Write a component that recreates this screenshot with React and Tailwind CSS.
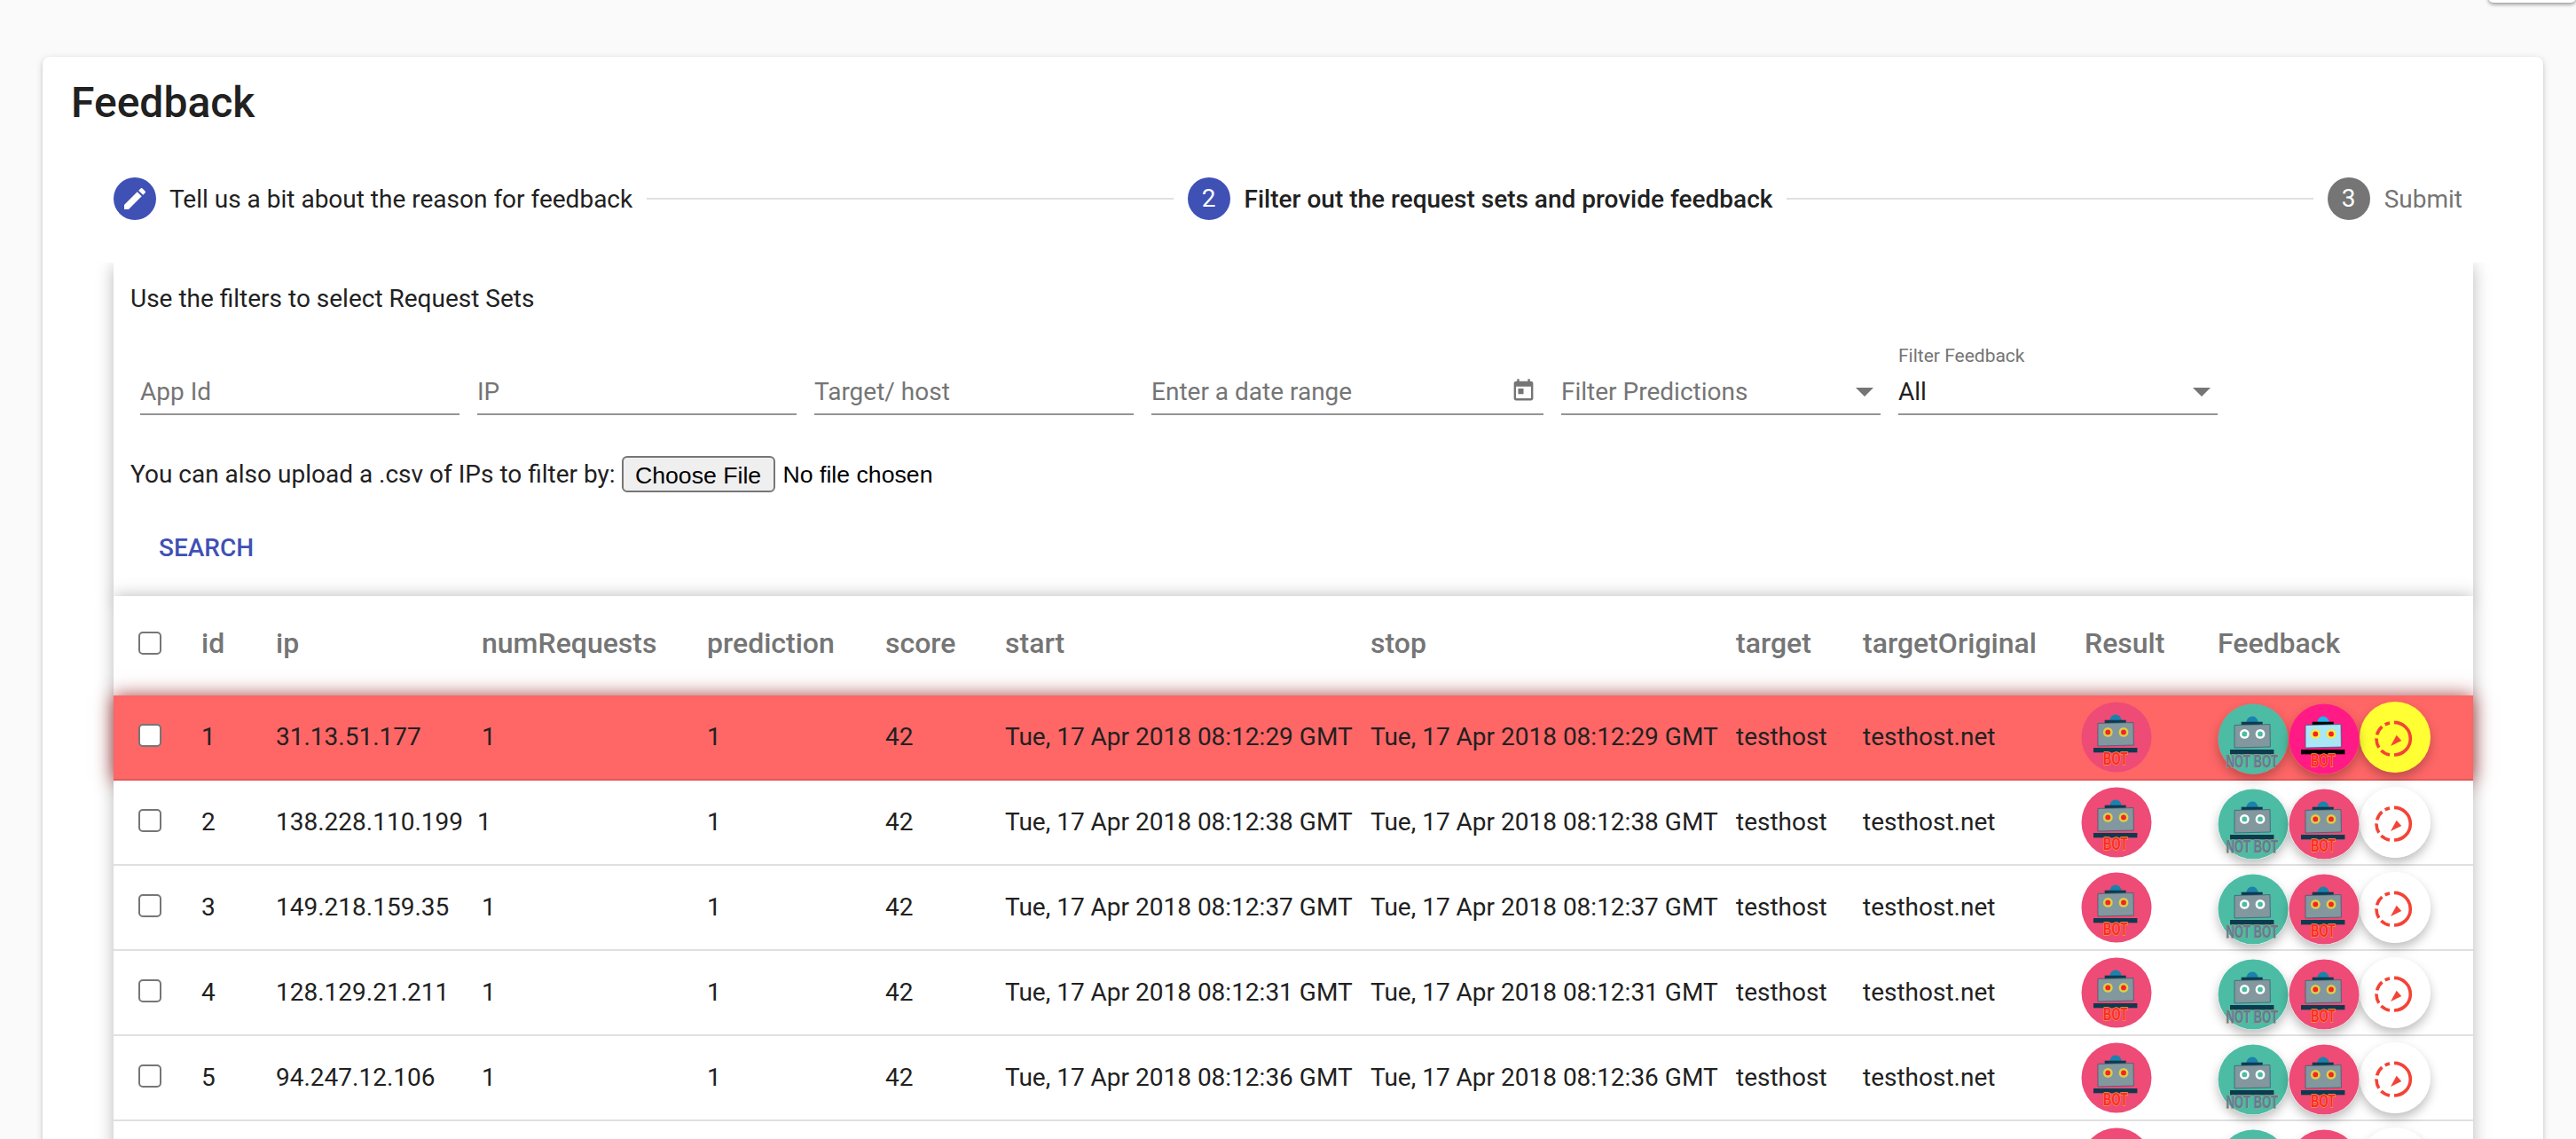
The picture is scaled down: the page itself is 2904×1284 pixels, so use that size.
const rows = [
  { id: 1, ip: '31.13.51.177', stamp: 'Tue, 17 Apr 2018 08:12:29 GMT', flagged: true },
  { id: 2, ip: '138.228.110.199', stamp: 'Tue, 17 Apr 2018 08:12:38 GMT', shift: true },
  { id: 3, ip: '149.218.159.35', stamp: 'Tue, 17 Apr 2018 08:12:37 GMT' },
  { id: 4, ip: '128.129.21.211', stamp: 'Tue, 17 Apr 2018 08:12:31 GMT' },
  { id: 5, ip: '94.247.12.106', stamp: 'Tue, 17 Apr 2018 08:12:36 GMT' },
  { id: 6, ip: '', stamp: '', empty: true },
]

const headers = ['id', 'ip', 'numRequests', 'prediction', 'score', 'start', 'stop', 'target', 'targetOriginal', 'Result', 'Feedback']

const gridCols = 'grid grid-cols-[71px_84px_232px_254px_201px_135px_412px_412px_143px_250px_150px_1fr] items-center pl-[28px]'

const RobotIcon = ({ bg = '#ee4b76', bright = false, notBot = false, label = true }) => {
  const dark = bright ? '#000000' : '#0e3a4f'
  return (
    <svg viewBox="0 0 80 80" className="w-[80px] h-[80px] block">
      <circle cx="40" cy="40" r="39.5" fill={bg} />
      <path d="M32.5 21a6.5 6.5 0 0 1 13 0z" fill={bright ? '#1fb4f0' : '#1a83ad'} />
      <rect x="26.7" y="20.7" width="24" height="3.4" fill={dark} />
      <path d="M19 24.4 L59 23.6 L59.4 49 L19 50z" fill={bright ? '#a8e6f8' : '#82979e'} stroke="#2d5a70" strokeWidth="0.7" />
      {[30.3, 48].map((cx) => (
        <g key={cx}>
          <circle cx={cx} cy="34.4" r="5.4" fill={notBot ? '#ffffff' : bright ? '#f5ec3e' : '#d9d04a'} />
          <circle cx={cx} cy="34.4" r="2.9" fill={notBot ? '#4dbca4' : '#f72222'} />
        </g>
      ))}
      <rect x="14" y="52" width="49.4" height="5.3" fill={dark} />
      {label && notBot && (
        <text transform="translate(9.4 72) scale(.62 1)" fontFamily="'Liberation Sans', sans-serif" fontWeight="700" fontSize="21" fill="#5b7ba0" stroke="#a39a66" strokeWidth="1.3" paintOrder="stroke">NOT BOT</text>
      )}
      {label && !notBot && (
        <text transform="translate(25 70.5) scale(.65 1)" fontFamily="'Liberation Sans', sans-serif" fontWeight="700" fontSize="20" fill="#ff2a2a" stroke="#f0a040" strokeWidth="1.3" paintOrder="stroke">BOT</text>
      )}
    </svg>
  )
}

const SkipIcon = ({ bg }) => (
  <svg viewBox="0 0 80 80" className="w-[80px] h-[80px] block">
    <circle cx="40" cy="40" r="40" fill={bg} />
    <path d="M39 23.4a18.3 18.3 0 0 1 0 36.6" fill="none" stroke="#f44336" strokeWidth="3.6" />
    <path d="M34 60a18.3 18.3 0 0 1 0-36" fill="none" stroke="#f44336" strokeWidth="3.6" strokeDasharray="11 4" />
    <path d="M41.7 37.7 L47.3 44 L35 50z" fill="#f44336" />
  </svg>
)

const TextFilter = ({ placeholder, width = 'w-[360px]', children }) => (
  <div className={`${width} h-[83px] flex items-end border-b-2 border-[#949494]`}>
    <input
      placeholder={placeholder}
      className="flex-1 min-w-0 h-[42px] pb-[6px] text-[28px] outline-none placeholder:text-[#757575] bg-transparent"
    />
    {children}
  </div>
)

const SelectFilter = ({ label, value }) => (
  <div className="w-[360px] h-[83px] flex flex-col justify-end border-b-2 border-[#949494]">
    {label && <span className="text-[21px] leading-[24px] text-[#757575] mb-[11px]">{label}</span>}
    <div className="flex items-center justify-between h-[42px] pb-[6px] pr-[8px]">
      <span className={`text-[28px] ${value === 'All' ? 'text-[#212121]' : 'text-[#757575]'}`}>{value}</span>
      <svg viewBox="0 0 20 10" className="w-[20px] h-[10px]"><path d="M0 0h20L10 10z" fill="#757575" /></svg>
    </div>
  </div>
)

const Step = ({ icon, className, labelClass, children }) => (
  <div className="flex items-center gap-4 shrink-0">
    <div className={`w-[48px] h-[48px] rounded-full flex items-center justify-center text-white text-[28px] ${className}`}>{icon}</div>
    <span className={`text-[28px] pt-[2px] ${labelClass}`}>{children}</span>
  </div>
)

const Tick = ({ className = '' }) => (
  <input type="checkbox" className={`appearance-none block w-[26px] h-[26px] bg-white border-2 border-[#767676] rounded-[5px] ${className}`} />
)

const App = () => {
  return (
    <div className="relative h-screen overflow-hidden bg-[#fafafa] pt-[64px] px-[37px] pr-[37px] font-[Roboto,sans-serif] text-[#212121]">
      <div className="absolute -top-[20px] right-0 w-[99px] h-[23px] bg-white rounded-[6px] shadow-[0_2px_4px_rgba(0,0,0,.4)]" />

      <div className="ml-[11px] w-[2819px] min-h-[1400px] bg-white rounded-[8px] pt-[25px] pl-[32px] shadow-[0_4px_2px_-2px_rgba(0,0,0,.2),0_2px_4px_0_rgba(0,0,0,.14),0_2px_10px_0_rgba(0,0,0,.12)]">
        <h1 className="text-[48px] leading-[54px] font-medium">Feedback</h1>

        <div className="mt-[57px] ml-[48px] w-[2648px] flex items-center">
          <Step
            className="bg-[#3f51b5]"
            labelClass="text-[#212121] -ml-[1px]"
            icon={
              <svg viewBox="0 0 24 24" className="w-[32px] h-[32px]" fill="#ffffff">
                <path d="M3 17.25V21h3.75L17.81 9.94l-3.75-3.75L3 17.25zM20.71 7.04c.39-.39.39-1.02 0-1.41l-2.34-2.34c-.39-.39-1.02-.39-1.41 0l-1.83 1.83 3.75 3.75 1.83-1.83z" />
              </svg>
            }
          >
            Tell us a bit about the reason for feedback
          </Step>
          <div className="flex-1 h-[2px] mx-4 bg-[#e0e0e0]" />
          <Step className="bg-[#3f51b5]" labelClass="font-medium text-[#212121]" icon="2">
            Filter out the request sets and provide feedback
          </Step>
          <div className="flex-1 h-[2px] mx-4 bg-[#e0e0e0]" />
          <Step className="bg-[#757575]" labelClass="text-[#757575]" icon="3">
            Submit
          </Step>
        </div>

        <div className="mt-[48px] ml-[48px] w-[2660px] [clip-path:inset(0_-60px_-60px_-60px)]">
          <div className="bg-white pt-[21px] pl-[19px] pb-[35px] shadow-[0_4px_18px_rgba(0,0,0,.28)]">
            <p className="text-[28px] leading-[40px]">Use the filters to select Request Sets</p>

            <div className="mt-[28px] ml-[11px] flex gap-5">
              <TextFilter placeholder="App Id" />
              <TextFilter placeholder="IP" />
              <TextFilter placeholder="Target/ host" />
              <TextFilter placeholder="Enter a date range" width="w-[442px]">
                <svg viewBox="0 0 24 24" className="w-[29px] h-[29px] mr-[8px] mb-[11px] shrink-0" fill="#757575">
                  <path d="M19 3h-1V1h-2v2H8V1H6v2H5c-1.11 0-1.99.9-1.99 2L3 19c0 1.1.89 2 2 2h14c1.1 0 2-.9 2-2V5c0-1.1-.9-2-2-2zm0 16H5V8h14v11zM7 10h5v5H7z" />
                </svg>
              </TextFilter>
              <SelectFilter value="Filter Predictions" />
              <SelectFilter label="Filter Feedback" value="All" />
            </div>

            <div className="mt-[46px] h-[41px] flex items-center text-[28px]">
              <span>You can also upload a .csv of IPs to filter by:</span>
              <button className="ml-[7px] w-[173px] h-[41px] bg-[#efefef] border-2 border-[#767676] rounded-[6px] text-[26.67px] text-black font-['Liberation_Sans',sans-serif]">
                Choose File
              </button>
              <span className="ml-[9px] text-[26.67px] text-black font-['Liberation_Sans',sans-serif]">No file chosen</span>
            </div>

            <button className="mt-[42px] ml-[32px] h-[40px] text-[28px] font-medium text-[#3f51b5] block">SEARCH</button>
          </div>

          <div className="relative bg-white shadow-[0_0_18px_rgba(0,0,0,.28)]">
            <div className={`${gridCols} h-[112px] pb-[6px]`}>
              <Tick />
              {headers.map((h) => (
                <div key={h} className="text-[32px] font-medium text-[#757575] whitespace-nowrap">{h}</div>
              ))}
            </div>

            {rows.map((row) => (
              <div
                key={row.id}
                className={`${gridCols} h-[96px] border-b-2 border-[rgba(0,0,0,.12)] ${row.flagged ? 'bg-[#ff6666] shadow-[0_0_20px_rgba(150,30,30,.85)]' : 'bg-white'}`}
              >
                <Tick className="-translate-y-[2px]" />
                <div className="text-[28px]">{!row.empty && row.id}</div>
                <div className="text-[28px]">{row.ip}</div>
                <div className={`text-[28px] ${row.shift ? '-ml-[5px]' : ''}`}>{!row.empty && 1}</div>
                <div className="text-[28px]">{!row.empty && 1}</div>
                <div className="text-[28px]">{!row.empty && 42}</div>
                <div className="text-[28px] whitespace-nowrap">{row.stamp}</div>
                <div className="text-[28px] whitespace-nowrap">{row.stamp}</div>
                <div className="text-[28px]">{!row.empty && 'testhost'}</div>
                <div className="text-[28px]">{!row.empty && 'testhost.net'}</div>
                <div className="-ml-[4px]">
                  <RobotIcon label={!row.empty} />
                </div>
                <div className="flex items-center w-[240px]">
                  <div className="rounded-full translate-y-[2px] shadow-[0_6px_12px_rgba(0,0,0,.25)]">
                    <RobotIcon bg="#4dbca4" notBot label={!row.empty} />
                  </div>
                  <div className="rounded-full translate-y-[2px] shadow-[0_6px_12px_rgba(0,0,0,.25)]">
                    <RobotIcon bg={row.flagged ? '#ff1a85' : '#ee4b76'} bright={row.flagged} label={!row.empty} />
                  </div>
                  <div className="rounded-full shadow-[0_6px_12px_rgba(0,0,0,.25)]">
                    <SkipIcon bg={row.flagged ? '#ffff33' : '#ffffff'} />
                  </div>
                </div>
              </div>
            ))}
          </div>
        </div>
      </div>
    </div>
  )
}

export default App
